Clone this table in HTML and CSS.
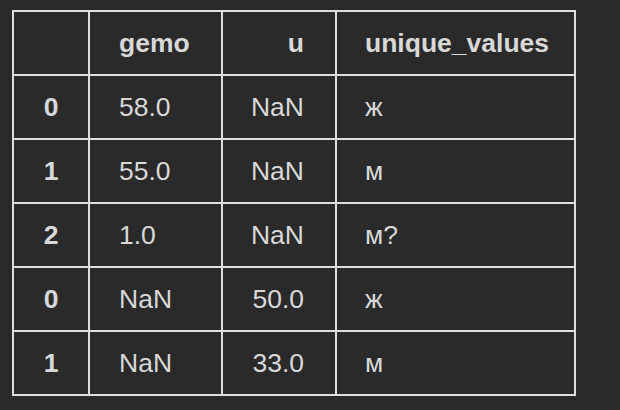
FILE: index.html
```html
<!DOCTYPE html>
<html>
<head>
<meta charset="utf-8">
<link rel="stylesheet" href="styles.css">
</head>
<body>
<div class="wrap">
<table class="df">
  <thead>
    <tr>
      <th class="c-idx"></th>
      <th class="c-gemo">gemo</th>
      <th class="c-u">u</th>
      <th class="c-uv">unique_values</th>
    </tr>
  </thead>
  <tbody>
    <tr><th class="c-idx">0</th><td class="c-gemo">58.0</td><td class="c-u">NaN</td><td class="c-uv">ж</td></tr>
    <tr><th class="c-idx">1</th><td class="c-gemo">55.0</td><td class="c-u">NaN</td><td class="c-uv">м</td></tr>
    <tr><th class="c-idx">2</th><td class="c-gemo">1.0</td><td class="c-u">NaN</td><td class="c-uv">м?</td></tr>
    <tr><th class="c-idx">0</th><td class="c-gemo">NaN</td><td class="c-u">50.0</td><td class="c-uv">ж</td></tr>
    <tr><th class="c-idx">1</th><td class="c-gemo">NaN</td><td class="c-u">33.0</td><td class="c-uv">м</td></tr>
  </tbody>
</table>
</div>
</body>
</html>
```
FILE: styles.css
```css
html, body {
  margin: 0;
  background: #2a2a2a;
}
.wrap {
  padding: 10px 12px;
}
.df {
  border-collapse: separate;
  border-spacing: 0;
  table-layout: fixed;
  width: 564px;
  border-left: 2px solid #dedede;
  border-top: 2px solid #dedede;
  font-family: "Liberation Sans", Arial, sans-serif;
  font-size: 26.5px;
  color: #d8d8d8;
}
.df th, .df td {
  box-sizing: border-box;
  height: 64px;
  padding: 0;
  border-right: 2px solid #dedede;
  border-bottom: 2px solid #dedede;
  vertical-align: middle;
  white-space: nowrap;
  line-height: 30px;
}
.df th {
  font-weight: bold;
}
.df td {
  font-weight: normal;
}
.c-idx {
  width: 76px;
  text-align: center;
}
.c-gemo {
  width: 133px;
  text-align: left;
  padding-left: 29px !important;
}
.c-u {
  width: 114px;
  text-align: right;
  padding-right: 31px !important;
}
.c-uv {
  width: 239px;
  text-align: left;
  padding-left: 28px !important;
}
```
